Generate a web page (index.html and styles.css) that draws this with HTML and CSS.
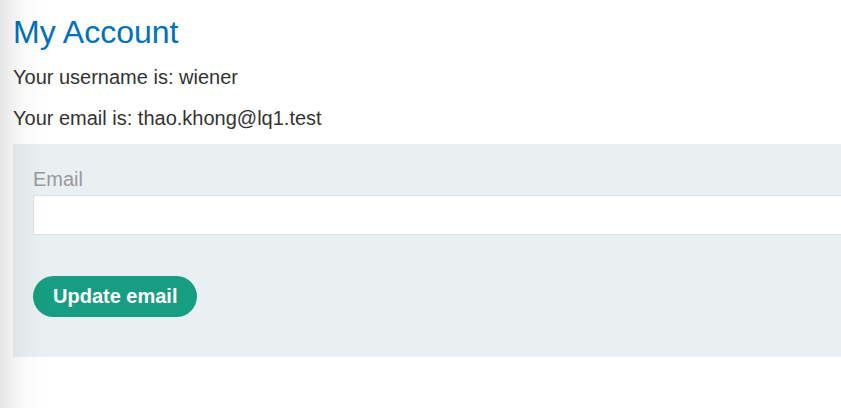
FILE: index.html
```html
<!DOCTYPE html>
<html lang="en">
<head>
<meta charset="utf-8">
<title>My Account</title>
<link rel="stylesheet" href="styles.css">
</head>
<body>
<div class="edge-shade"></div>
<main class="page">
  <h1 class="title">My Account</h1>
  <div class="info">
    <p class="info-line">Your username is: wiener</p>
    <p class="info-line">Your email is: thao.khong@lq1.test</p>
  </div>
  <form class="panel">
    <label class="field-label" for="email">Email</label>
    <input class="field-input" id="email" type="email" name="email">
    <button class="btn" type="button">Update email</button>
  </form>
</main>
</body>
</html>
```

FILE: styles.css
```css
html, body {
  margin: 0;
  padding: 0;
  background: #ffffff;
}
body {
  font-family: "Liberation Sans", Arial, sans-serif;
  color: #333332;
}
.edge-shade {
  position: fixed;
  top: 0;
  left: 0;
  bottom: 0;
  width: 44px;
  background: linear-gradient(to right, rgba(0,0,0,0.10) 0, rgba(0,0,0,0.05) 12px, rgba(0,0,0,0.015) 28px, rgba(0,0,0,0) 44px);
  pointer-events: none;
  z-index: 5;
}
.page {
  padding-left: 13px;
}
.title {
  margin: 14px 0 0;
  font-size: 32px;
  font-weight: normal;
  line-height: normal;
  color: #0071bc;
}
.info {
  display: flex;
  flex-direction: column;
  gap: 18px;
  margin: 15px 0 14px;
}
.info-line {
  margin: 0;
  font-size: 20px;
  line-height: 23px;
}
.panel {
  display: flex;
  flex-direction: column;
  align-items: flex-start;
  padding: 24px 0 40px 20px;
  background: #eaeff2;
}
.field-label {
  font-size: 20px;
  line-height: 23px;
  color: #999999;
  margin-bottom: 4px;
}
.field-input {
  width: 100%;
  height: 40px;
  box-sizing: border-box;
  border: 1px solid #dce1e4;
  border-right: none;
  background: #ffffff;
  margin: 0 0 41px;
  padding: 0 10px;
  font: inherit;
  outline: none;
}
.btn {
  height: 41px;
  padding: 0 20px;
  border: none;
  border-radius: 21px;
  background: #179d81;
  color: #ffffff;
  font-family: "Liberation Sans", Arial, sans-serif;
  font-weight: bold;
  font-size: 20px;
  cursor: pointer;
}
```
